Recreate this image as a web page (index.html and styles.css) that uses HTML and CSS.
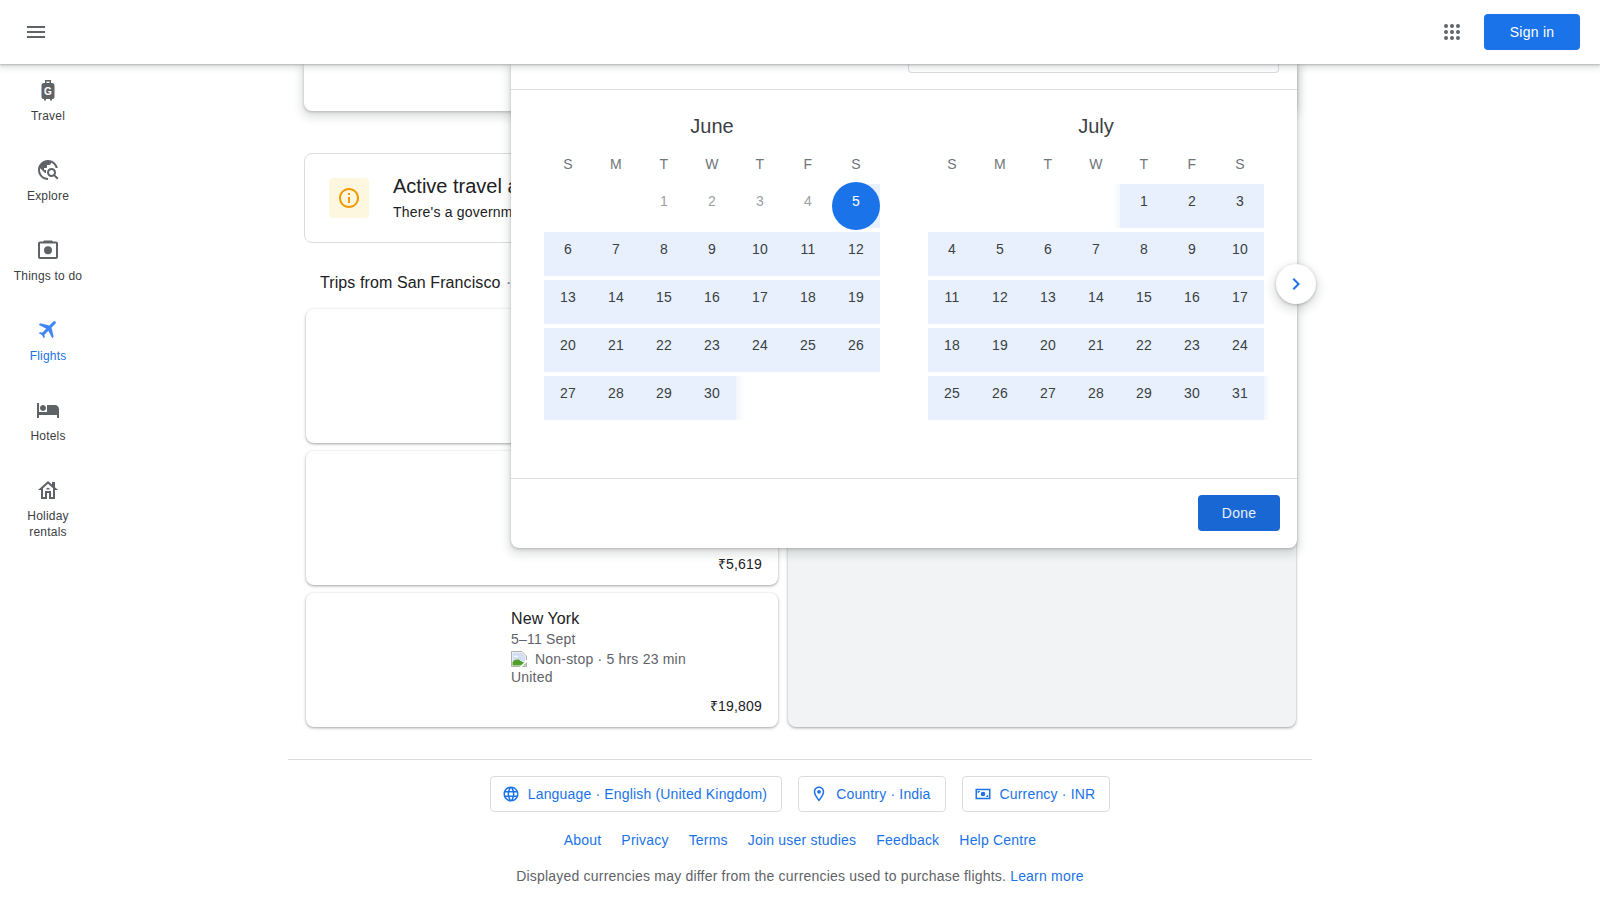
FILE: index.html
```html
<!DOCTYPE html>
<html lang="en">
<head>
    <meta charset="UTF-8">
    <meta name="viewport" content="width=device-width, initial-scale=1.0">
    <title>Google Flights</title>
    <link rel="stylesheet" href="styles.css">
</head>
<body>
    <header class="topbar">
        <svg class="icon menu-icon" viewBox="0 0 24 24"><path d="M3 18h18v-2H3v2zm0-5h18v-2H3v2zm0-7v2h18V6H3z"/></svg>
        <div class="topbar-right">
            <svg class="icon" viewBox="0 0 24 24">
                <circle cx="6" cy="6" r="2"/><circle cx="12" cy="6" r="2"/><circle cx="18" cy="6" r="2"/>
                <circle cx="6" cy="12" r="2"/><circle cx="12" cy="12" r="2"/><circle cx="18" cy="12" r="2"/>
                <circle cx="6" cy="18" r="2"/><circle cx="12" cy="18" r="2"/><circle cx="18" cy="18" r="2"/>
            </svg>
            <button class="signin">Sign in</button>
        </div>
    </header>

    <div class="page">
        <nav class="sidebar">
            <a class="nav-item">
                <svg class="icon" viewBox="0 0 24 24">
                    <path fill-rule="evenodd" d="M9 2h6v3h1A2.500 2.500 0 0 1 18.500 7.500V19a2 2 0 0 1-2 2H16v1.500h-2V21h-4v1.500H8V21h-.5a2 2 0 0 1-2-2V7.500A2.500 2.500 0 0 1 8 5h1zm1.500 1.500V5h3V3.500z"/>
                    <text class="bag-letter" x="12" y="17" text-anchor="middle">G</text>
                </svg>
                <span>Travel</span>
            </a>
            <a class="nav-item">
                <svg class="icon" viewBox="0 0 24 24"><path d="M19.300 16.900c.4-.7.7-1.500.7-2.400 0-2.500-2-4.500-4.500-4.500S11 12 11 14.500s2 4.500 4.500 4.500c.9 0 1.700-.3 2.400-.7l3.200 3.200 1.400-1.400-3.200-3.200zm-3.800.1c-1.400 0-2.500-1.100-2.500-2.500s1.100-2.500 2.500-2.500 2.500 1.100 2.500 2.500-1.100 2.500-2.500 2.500zM12 20v2C6.480 22 2 17.520 2 12S6.480 2 12 2c4.840 0 8.870 3.440 9.800 8h-2.070c-.64-2.460-2.400-4.470-4.730-5.410V5c0 1.100-.9 2-2 2h-2v2c0 .55-.45 1-1 1H8v2h2v3H9l-4.790-4.790C4.080 10.790 4 11.380 4 12c0 4.410 3.590 8 8 8z"/></svg>
                <span>Explore</span>
            </a>
            <a class="nav-item">
                <svg class="icon" viewBox="0 0 24 24"><path fill-rule="evenodd" d="M7 3.500 8 2.500h8l1 1h3A2 2 0 0 1 22 5.500V19a2 2 0 0 1-2 2H4a2 2 0 0 1-2-2V5.500a2 2 0 0 1 2-2zM4 5.500V19h16V5.500z"/><circle cx="12" cy="12.300" r="4"/></svg>
                <span>Things to do</span>
            </a>
            <a class="nav-item active">
                <svg class="icon" viewBox="0 0 24 24"><path transform="translate(.7 -1) rotate(45 12 12)" d="M21 16v-2l-8-5V3.500c0-.83-.67-1.500-1.500-1.500S10 2.670 10 3.500V9l-8 5v2l8-2.500V19l-2 1.500V22l3.500-1 3.500 1v-1.500L13 19v-5.500l8 2.500z"/></svg>
                <span>Flights</span>
            </a>
            <a class="nav-item">
                <svg class="icon" viewBox="0 0 24 24"><path d="M7 13c1.660 0 3-1.340 3-3S8.660 7 7 7s-3 1.340-3 3 1.340 3 3 3zm12-6h-8v7H3V5H1v15h2v-3h18v3h2v-9c0-2.210-1.790-4-4-4z"/></svg>
                <span>Hotels</span>
            </a>
            <a class="nav-item">
                <svg class="icon" viewBox="0 0 24 24"><path fill-rule="evenodd" d="M12 3 2 12h3v9h6v-6h2v6h6v-9h3l-3-2.700V4h-3v2.600zM7 19v-8.800l5-4.500 5 4.500V19h-2v-6H9v6zm3.200-7.500a1.800 1.800 0 0 1 3.600 0z"/></svg>
                <span>Holiday rentals</span>
            </a>
        </nav>

        <main class="content">
            <div class="results">
                <div class="top-card"></div>

                <div class="advisory">
                    <div class="advisory-badge">
                        <svg class="info-icon" viewBox="0 0 24 24"><path d="M11 7h2v2h-2zm0 4h2v6h-2zm1-9C6.480 2 2 6.480 2 12s4.480 10 10 10 10-4.480 10-10S17.520 2 12 2zm0 18c-4.410 0-8-3.590-8-8s3.590-8 8-8 8 3.590 8 8-3.590 8-8 8z"/></svg>
                    </div>
                    <div class="advisory-copy">
                        <div class="advisory-title">Active travel advisory</div>
                        <div class="advisory-text">There's a government advisory</div>
                    </div>
                </div>

                <h2 class="trips-title">Trips from San Francisco <span class="trips-sep">·</span></h2>

                <div class="trips">
                    <div class="trip-list">
                        <div class="trip-card"></div>
                        <div class="trip-card">
                            <div class="trip-price">₹5,619</div>
                        </div>
                        <div class="trip-card">
                            <div class="trip-info">
                                <div class="trip-city">New York</div>
                                <div class="trip-line">5–11 Sept</div>
                                <div class="trip-line trip-flight">
                                    <svg class="broken-img" viewBox="0 0 16 16">
                                        <path d="M.5.500h10.500l4.500 4.500v10.500H.5z" fill="#fff" stroke="#b0b0b0"/>
                                        <path d="M1.500 1.500h9l4 4v5H1.500z" fill="#d3def3"/>
                                        <path d="M3 6c1-2 3-2 4 0z" fill="#fff"/>
                                        <path d="M1.500 14.500V11c3-3 6-3 8-1l5 2v2.500z" fill="#4fa02a"/>
                                        <path d="M8.500 16l7.500-7.500V11l-5 5z" fill="#fff"/>
                                    </svg>
                                    <span>Non-stop · 5 hrs 23 min</span>
                                </div>
                                <div class="trip-line trip-airline">United</div>
                            </div>
                            <div class="trip-price">₹19,809</div>
                        </div>
                    </div>
                    <div class="map-panel"></div>
                </div>
            </div>

            <footer class="footer">
                <div class="footer-buttons">
                    <a class="footer-btn">
                        <svg class="btn-icon" viewBox="0 0 24 24"><path d="M11.990 2C6.470 2 2 6.480 2 12s4.470 10 9.990 10C17.520 22 22 17.520 22 12S17.520 2 11.990 2zm6.930 6h-2.950c-.32-1.250-.78-2.450-1.380-3.560 1.840.63 3.370 1.910 4.330 3.560zM12 4.040c.83 1.200 1.480 2.530 1.910 3.960h-3.820c.43-1.430 1.080-2.760 1.910-3.960zM4.260 14C4.100 13.360 4 12.690 4 12s.1-1.360.26-2h3.380c-.08.66-.14 1.320-.14 2 0 .68.06 1.340.14 2H4.260zm.82 2h2.950c.32 1.250.78 2.450 1.380 3.560-1.840-.63-3.370-1.900-4.330-3.560zm2.950-8H5.080c.96-1.660 2.490-2.930 4.330-3.560C8.810 5.550 8.350 6.750 8.030 8zM12 19.960c-.83-1.200-1.480-2.530-1.910-3.960h3.820c-.43 1.430-1.080 2.760-1.910 3.960zM14.340 14H9.660c-.09-.66-.16-1.320-.16-2 0-.68.07-1.350.16-2h4.680c.09.650.16 1.320.16 2 0 .68-.07 1.340-.16 2zm.25 5.560c.6-1.110 1.060-2.310 1.380-3.560h2.950c-.96 1.650-2.490 2.930-4.330 3.560zM16.360 14c.08-.66.14-1.320.14-2 0-.68-.06-1.340-.14-2h3.380c.16.640.26 1.310.26 2s-.1 1.360-.26 2h-3.380z"/></svg>
                        Language · English (United Kingdom)
                    </a>
                    <a class="footer-btn">
                        <svg class="btn-icon" viewBox="0 0 24 24"><path d="M12 2C8.130 2 5 5.130 5 9c0 5.250 7 13 7 13s7-7.750 7-13c0-3.870-3.130-7-7-7zM7 9c0-2.760 2.240-5 5-5s5 2.240 5 5c0 2.880-2.880 7.190-5 9.880C9.920 16.210 7 11.850 7 9z"/><circle cx="12" cy="9" r="2.500"/></svg>
                        Country · India
                    </a>
                    <a class="footer-btn">
                        <svg class="btn-icon" viewBox="0 0 24 24"><path fill-rule="evenodd" d="M2 5h20v14H2zm2 2v10h16V7z"/><circle cx="12" cy="12" r="3"/><path d="M5 8h3.500L5 11.500zM19 16h-3.500l3.500-3.500z"/></svg>
                        Currency · INR
                    </a>
                </div>
                <div class="footer-links">
                    <a>About</a>
                    <a>Privacy</a>
                    <a>Terms</a>
                    <a>Join user studies</a>
                    <a>Feedback</a>
                    <a>Help Centre</a>
                </div>
                <p class="footer-note">Displayed currencies may differ from the currencies used to purchase flights. <a>Learn more</a></p>
            </footer>

            <div class="date-modal">
                <div class="modal-top">
                    <div class="date-field"></div>
                </div>
                <div class="months">
                    <section class="month">
                        <h3>June</h3>
                        <div class="week weekdays"><span>S</span><span>M</span><span>T</span><span>W</span><span>T</span><span>F</span><span>S</span></div>
                        <div class="week">
                            <span></span><span></span>
                            <span class="past">1</span><span class="past">2</span><span class="past">3</span><span class="past">4</span>
                            <span class="selected">5</span>
                        </div>
                        <div class="week range"><span>6</span><span>7</span><span>8</span><span>9</span><span>10</span><span>11</span><span>12</span></div>
                        <div class="week range"><span>13</span><span>14</span><span>15</span><span>16</span><span>17</span><span>18</span><span>19</span></div>
                        <div class="week range"><span>20</span><span>21</span><span>22</span><span>23</span><span>24</span><span>25</span><span>26</span></div>
                        <div class="week">
                            <span class="in">27</span><span class="in">28</span><span class="in">29</span><span class="in">30</span>
                            <span class="fade-right"></span>
                        </div>
                    </section>
                    <section class="month">
                        <h3>July</h3>
                        <div class="week weekdays"><span>S</span><span>M</span><span>T</span><span>W</span><span>T</span><span>F</span><span>S</span></div>
                        <div class="week">
                            <span></span><span></span><span></span>
                            <span class="fade-left"></span>
                            <span class="in">1</span><span class="in">2</span><span class="in">3</span>
                        </div>
                        <div class="week range"><span>4</span><span>5</span><span>6</span><span>7</span><span>8</span><span>9</span><span>10</span></div>
                        <div class="week range"><span>11</span><span>12</span><span>13</span><span>14</span><span>15</span><span>16</span><span>17</span></div>
                        <div class="week range"><span>18</span><span>19</span><span>20</span><span>21</span><span>22</span><span>23</span><span>24</span></div>
                        <div class="week range"><span>25</span><span>26</span><span>27</span><span>28</span><span>29</span><span>30</span><span>31</span><i class="fade-end"></i></div>
                    </section>
                </div>
                <div class="modal-bottom">
                    <button class="done">Done</button>
                </div>
                <button class="next-month">
                    <svg class="icon" viewBox="0 0 24 24"><path d="M10 6 8.590 7.410 13.170 12l-4.580 4.590L10 18l6-6z"/></svg>
                </button>
            </div>
        </main>
    </div>
</body>
</html>
```

FILE: styles.css
```css
* {
    box-sizing: border-box;
}

body {
    margin: 0;
    height: 900px;
    overflow: hidden;
    background-color: #fff;
    font-family: "Liberation Sans", Arial, sans-serif;
    font-size: 14px;
    letter-spacing: 0.2px;
    color: #202124;
}

.icon {
    width: 24px;
    height: 24px;
    fill: #5f6368;
    flex: none;
}

/* top bar */
.topbar {
    position: relative;
    z-index: 10;
    display: flex;
    justify-content: space-between;
    align-items: center;
    height: 64px;
    padding: 0 20px 0 24px;
    background-color: #fff;
    box-shadow: 0 1px 2px rgba(60, 64, 67, 0.3), 0 2px 6px 2px rgba(60, 64, 67, 0.15);
}

.topbar-right {
    display: flex;
    align-items: center;
    gap: 20px;
}

.signin {
    width: 96px;
    height: 36px;
    border: 0;
    border-radius: 4px;
    background-color: #1a73e8;
    color: #fff;
    font-family: inherit;
    font-size: 14px;
    letter-spacing: 0.25px;
}

/* page columns */
.page {
    display: grid;
    grid-template-columns: 288px 1024px 288px;
}

.sidebar {
    display: flex;
    flex-direction: column;
    width: 96px;
    padding-top: 14px;
}

.nav-item {
    display: flex;
    flex-direction: column;
    align-items: center;
    gap: 7px;
    height: 80px;
    padding: 0 12px;
    font-size: 12px;
    line-height: 15.5px;
    text-align: center;
    color: #3c4043;
}

.nav-item.active {
    color: #1a73e8;
}

.nav-item.active .icon {
    fill: #4285f4;
}

.bag-letter {
    font-size: 10px;
    font-weight: 700;
    letter-spacing: 0;
    fill: #fff;
}

/* results column */
.content {
    position: relative;
}

.results {
    padding: 0 16px;
}

.top-card {
    height: 47px;
    margin-bottom: 42px;
    border-radius: 0 0 8px 8px;
    box-shadow: 0 1px 3px rgba(60, 64, 67, 0.3), 0 4px 8px 3px rgba(60, 64, 67, 0.15);
}

.advisory {
    display: flex;
    align-items: center;
    gap: 24px;
    height: 90px;
    padding-left: 24px;
    border: 1px solid #dadce0;
    border-radius: 8px;
}

.advisory-copy {
    margin-top: -2px;
}

.advisory-badge {
    display: flex;
    justify-content: center;
    align-items: center;
    width: 40px;
    height: 40px;
    border-radius: 4px;
    background-color: #fef7e0;
}

.info-icon {
    width: 24px;
    height: 24px;
    fill: #f29900;
}

.advisory-title {
    font-size: 20px;
    line-height: 28px;
    letter-spacing: 0;
}

.advisory-text {
    font-size: 14px;
    line-height: 20px;
    margin-top: 2px;
}

.trips-title {
    margin: 28px 0 14px 16px;
    font-size: 16px;
    font-weight: 400;
    line-height: 24px;
    letter-spacing: 0.1px;
}

.trips-sep {
    margin-left: 1px;
    color: #70757a;
}

.trips {
    display: flex;
    gap: 10px;
}

.trip-list {
    display: flex;
    flex-direction: column;
    gap: 8px;
    width: 472px;
    margin-left: 2px;
}

.trip-card {
    display: flex;
    flex-direction: column;
    justify-content: flex-end;
    height: 134px;
    padding: 15px 16px 11px 205px;
    border-radius: 8px;
    background-color: #fff;
    box-shadow: 0 1px 2px rgba(60, 64, 67, 0.3), 0 1px 3px 1px rgba(60, 64, 67, 0.15);
}

.trip-info {
    flex: 1;
}

.trip-city {
    font-size: 16px;
    line-height: 21px;
    letter-spacing: 0.1px;
}

.trip-line {
    line-height: 20px;
    color: #5f6368;
}

.trip-flight {
    display: flex;
    align-items: center;
    gap: 8px;
}

.trip-airline {
    line-height: 16px;
}

.broken-img {
    width: 16px;
    height: 16px;
}

.trip-price {
    line-height: 20px;
    text-align: right;
}

.map-panel {
    width: 508px;
    border-radius: 8px;
    background-color: #f1f3f4;
    box-shadow: 0 1px 2px rgba(60, 64, 67, 0.3), 0 1px 3px 1px rgba(60, 64, 67, 0.15);
}

/* footer */
.footer {
    margin-top: 32px;
    padding-top: 16px;
    border-top: 1px solid #dadce0;
    text-align: center;
}

.footer-buttons {
    display: flex;
    justify-content: center;
    gap: 16px;
}

.footer-btn {
    display: flex;
    align-items: center;
    gap: 8px;
    height: 36px;
    padding: 0 14px 0 11px;
    border: 1px solid #dadce0;
    border-radius: 4px;
    letter-spacing: 0.17px;
    color: #1a73e8;
}

.btn-icon {
    width: 18px;
    height: 18px;
    fill: #1a73e8;
}

.footer-links {
    display: flex;
    justify-content: center;
    gap: 20px;
    margin-top: 18px;
    line-height: 20px;
    color: #1a73e8;
}

.footer-note {
    margin: 16px 0 0;
    line-height: 20px;
    color: #5f6368;
}

.footer-note a {
    color: #1a73e8;
}

/* date picker, sits over the results */
.date-modal {
    position: absolute;
    top: 0;
    left: 223px;
    width: 786px;
    height: 484px;
    border-radius: 0 0 8px 8px;
    background-color: #fff;
    box-shadow: 0 1px 3px rgba(60, 64, 67, 0.3), 0 4px 8px 3px rgba(60, 64, 67, 0.15);
}

.modal-top {
    height: 26px;
    padding-left: 397px;
    border-bottom: 1px solid #dadce0;
}

.date-field {
    width: 371px;
    height: 9px;
    border: 1px solid #dadce0;
    border-top: 0;
    border-radius: 0 0 4px 4px;
}

.months {
    display: flex;
    gap: 48px;
    height: 388px;
    padding: 22px 0 0 33px;
}

.month {
    width: 336px;
}

.month h3 {
    margin: 0 0 12px;
    font-size: 20px;
    font-weight: 400;
    line-height: 28px;
    text-align: center;
    letter-spacing: 0;
    color: #3c4043;
}

.week {
    display: flex;
    height: 44px;
    margin-bottom: 4px;
}

.week span {
    position: relative;
    width: 48px;
    line-height: 34px;
    text-align: center;
    color: #3c4043;
}

.week.weekdays {
    height: 24px;
    margin-bottom: 8px;
}

.week.weekdays span {
    line-height: 24px;
    color: #70757a;
}

.week.range {
    background-color: #e8f0fe;
}

.week span.in {
    background-color: #e8f0fe;
}

.week span.past {
    color: #9aa0a6;
}

.week span.selected {
    z-index: 0;
    background: linear-gradient(to right, transparent 50%, #e8f0fe 50%);
    color: #fff;
}

.week span.selected::before {
    content: "";
    position: absolute;
    z-index: -1;
    top: -2px;
    left: 0;
    width: 48px;
    height: 48px;
    border-radius: 50%;
    background-color: #1a73e8;
}

.fade-right {
    background: linear-gradient(to right, #f3f6fe, #fff 9px);
}

.fade-left {
    background: linear-gradient(to left, #f3f6fe, #fff 7px);
}

.fade-end {
    width: 6px;
    margin-left: auto;
    margin-right: -6px;
    background: linear-gradient(to right, #f3f6fe, #fff);
}

.modal-bottom {
    display: flex;
    justify-content: flex-end;
    height: 70px;
    padding: 16px 17px 0 0;
    border-top: 1px solid #dadce0;
}

.done {
    width: 82px;
    height: 36px;
    border: 0;
    border-radius: 4px;
    background-color: #1967d2;
    color: #e8f0fe;
    font-family: inherit;
    font-size: 14px;
    letter-spacing: 0.25px;
}

.next-month {
    position: absolute;
    top: 200px;
    right: -19px;
    display: flex;
    justify-content: center;
    align-items: center;
    width: 40px;
    height: 40px;
    padding: 0;
    border: 0;
    border-radius: 50%;
    background-color: #fff;
    box-shadow: 0 1px 3px rgba(60, 64, 67, 0.3), 0 4px 8px 3px rgba(60, 64, 67, 0.15);
}

.next-month .icon {
    fill: #1a73e8;
}
```
